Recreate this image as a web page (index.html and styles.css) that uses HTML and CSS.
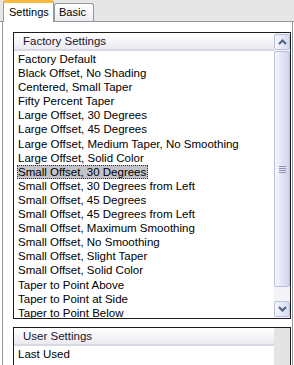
FILE: index.html
```html
<!DOCTYPE html>
<html>
<head>
    <title>Shadow Settings</title>
    <link rel="stylesheet" href="styles.css">
</head>
<body>
    <div class="tabs">
        <div class="tab active">Settings</div>
        <div class="tab">Basic</div>
    </div>

    <div class="panel">
        <!-- factory presets -->
        <div class="listbox factory">
            <div class="list-main">
                <div class="list-header">Factory Settings</div>
                <div class="items">
                    <div class="item">Factory Default</div>
                    <div class="item">Black Offset, No Shading</div>
                    <div class="item">Centered, Small Taper</div>
                    <div class="item">Fifty Percent Taper</div>
                    <div class="item">Large Offset, 30 Degrees</div>
                    <div class="item">Large Offset, 45 Degrees</div>
                    <div class="item">Large Offset, Medium Taper, No Smoothing</div>
                    <div class="item">Large Offset, Solid Color</div>
                    <div class="item selected">Small Offset, 30 Degrees</div>
                    <div class="item">Small Offset, 30 Degrees from Left</div>
                    <div class="item">Small Offset, 45 Degrees</div>
                    <div class="item">Small Offset, 45 Degrees from Left</div>
                    <div class="item">Small Offset, Maximum Smoothing</div>
                    <div class="item">Small Offset, No Smoothing</div>
                    <div class="item">Small Offset, Slight Taper</div>
                    <div class="item">Small Offset, Solid Color</div>
                    <div class="item">Taper to Point Above</div>
                    <div class="item">Taper to Point at Side</div>
                    <div class="item">Taper to Point Below</div>
                </div>
            </div>
            <div class="scrollbar">
                <div class="scroll-btn">
                    <svg width="9" height="6" viewBox="0 0 9 6"><path d="M1 5 L4.5 1.5 L8 5" fill="none" stroke="#4d6185" stroke-width="2"/></svg>
                </div>
                <div class="thumb">
                    <div class="grip"></div>
                </div>
                <div class="track"></div>
                <div class="scroll-btn">
                    <svg width="9" height="6" viewBox="0 0 9 6"><path d="M1 1 L4.5 4.5 L8 1" fill="none" stroke="#4d6185" stroke-width="2"/></svg>
                </div>
            </div>
        </div>

        <!-- user presets -->
        <div class="listbox user">
            <div class="list-main">
                <div class="list-header">User Settings</div>
                <div class="items">
                    <div class="item">Last Used</div>
                </div>
            </div>
            <div class="scroll-blank"></div>
        </div>
    </div>
</body>
</html>
```

FILE: styles.css
```css
html, body {
    height: 100%;
    overflow: hidden;
}

body {
    margin: 0;
    background-color: #ffffff;
    font-family: "Liberation Sans", Arial, sans-serif;
    font-size: 11.5px;
    color: #000000;
}

/* Tab strip */
.tabs {
    display: flex;
    align-items: flex-end;
    height: 22px;
    padding-left: 3px;
    background-color: #e6e6e6;
    border-bottom: 1px solid #919b9c;
    box-sizing: border-box;
    font-size: 11px;
}

.tab {
    height: 18px;
    padding: 0 7px 0 4px;
    line-height: 17px;
    border: 1px solid #919b9c;
    border-bottom: none;
    border-radius: 3px 3px 0 0;
    background: linear-gradient(#ffffff, #ececf0);
    box-sizing: border-box;
}

.tab.active {
    height: 22px;
    width: 51px;
    padding: 0 0 0 5px;
    line-height: 19px;
    border-top: 3px solid #f5b944;
    background: #ffffff;
    margin-bottom: -1px;
    position: relative; /* sits over the panel's top line */
}

/* Panel under the tabs */
.panel {
    margin: 0 1px 0 2px;
    padding: 10px 1px 0 10px;
    border-left: 1px solid #919b9c;
    border-right: 1px solid #919b9c;
    height: 400px;
}

/* List boxes */
.listbox {
    display: flex;
    border: 1px solid #1c1c1c;
}

.factory {
    height: 287px;
    box-sizing: border-box;
}

.user {
    margin-top: 8px;
    height: 60px;
}

.list-main {
    flex: 1;
    overflow: hidden;
}

.list-header {
    height: 16px;
    padding-left: 9px;
    line-height: 16px;
    font-size: 11.5px;
    color: #1a1630;
    background: linear-gradient(#ffffff, #ebeaf0);
    border-bottom: 2px solid #d9d8e0;
}

.items {
    padding: 1px 0 0 4px;
}

.item {
    height: 14.1px;
    line-height: 14px;
    white-space: nowrap;
}

.item.selected {
    width: fit-content;
    padding: 0 2px 0 1px;
    margin-left: -1px;
    background-color: #c3c3c9;
    outline: 1px dotted #333333;
    outline-offset: -1px;
}

/* Scrollbar */
.scrollbar {
    width: 16px;
    display: flex;
    flex-direction: column;
    padding: 1px 0;
    background-color: #f4f4f8;
}

.scroll-btn {
    height: 16px;
    display: flex;
    align-items: center;
    justify-content: center;
    border: 1px solid #b8c0dc;
    border-radius: 2px;
    background: linear-gradient(90deg, #f4f6fd, #d6dbf0);
    box-sizing: border-box;
}

.thumb {
    height: 236px;
    margin-top: 1px;
    display: flex;
    align-items: center;
    justify-content: center;
    border: 1px solid #b9bfdc;
    border-radius: 2px;
    background: linear-gradient(90deg, #f6f6fc, #d2d5ec);
    box-sizing: border-box;
}

.grip {
    width: 7px;
    height: 7px;
    background: repeating-linear-gradient(#8c93b8 0 1px, transparent 1px 2px);
}

.track {
    flex: 1;
}

.scroll-blank {
    width: 16px;
    background-color: #e4e4e4;
}
```
